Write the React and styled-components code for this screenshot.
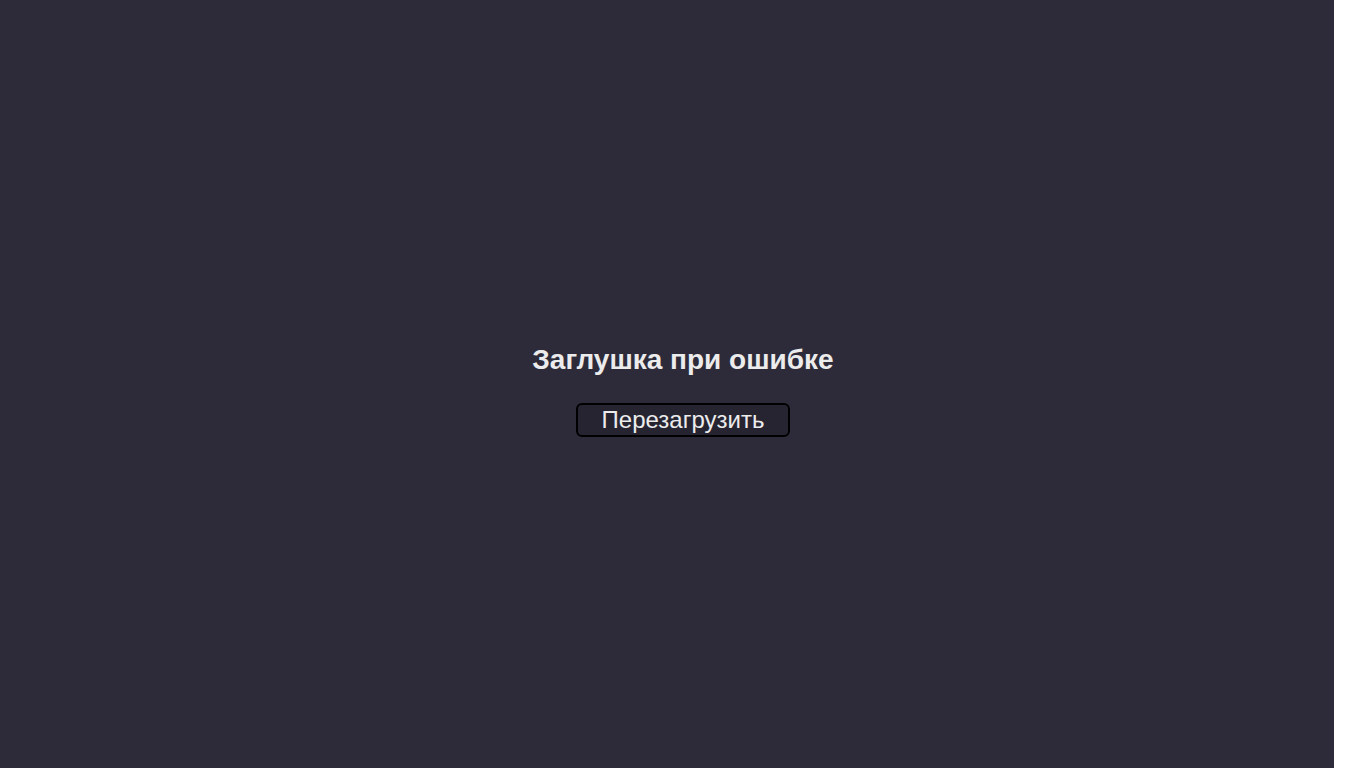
import styled, { createGlobalStyle } from 'styled-components'

const GlobalStyle = createGlobalStyle`
    body {
        margin: 0;
        background: #fff;
        font-family: "Liberation Sans", Arial, sans-serif;
    }
`
const Container = styled.div`
    box-sizing: border-box;
    width: calc(100vw - 16px);
    height: 100vh;
    padding: 13px 0 0 32px;
    background: #2d2b3a;
    display: flex;
    flex-direction: column;
    align-items: center;
    justify-content: center;
    color: #ececec;
`
const Title = styled.h2`
    font-size: 28px;
    font-weight: 700;
    margin: 0 0 27px;
`
const Button = styled.button`
    width: 214px;
    height: 34px;
    border: 2px solid #000;
    border-radius: 6px;
    background: rgba(0, 0, 0, 0.15);
    color: #ececec;
    font-family: "Liberation Sans", Arial, sans-serif;
    font-size: 24px;
    padding: 0;
    cursor: pointer;
`

export default function App() {
  return (
    <>
      <GlobalStyle />
      <Container>
        <Title>Заглушка при ошибке</Title>
        <Button>Перезагрузить</Button>
      </Container>
    </>
  )
}
